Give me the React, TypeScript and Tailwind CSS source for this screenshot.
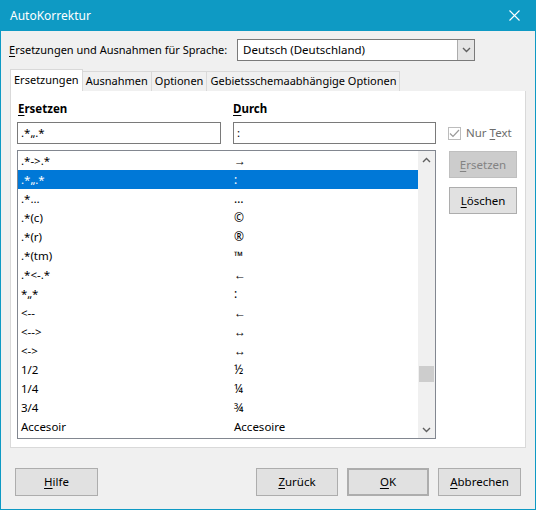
import React from 'react';

const rows: [string, string][] = [
  ['.*->.*', '→'],
  ['.*„.*', ':'],
  ['.*...', '…'],
  ['.*(c)', '©'],
  ['.*(r)', '®'],
  ['.*(tm)', '™'],
  ['.*<-.*', '←'],
  ['*„*', ':'],
  ['<--', '←'],
  ['<-->', '↔'],
  ['<->', '↔'],
  ['1/2', '½'],
  ['1/4', '¼'],
  ['3/4', '¾'],
  ['Accesoir', 'Accesoire'],
];

const U = ({ c }: { c: string }) => <span className="underline underline-offset-2">{c}</span>;

const Btn = ({ children, w, extra = '' }: { children: React.ReactNode; w: string; extra?: string }) => (
  <div className={`${w} h-[28px] flex items-center justify-center bg-[#e1e1e1] border border-[#adadad] ${extra}`}>
    {children}
  </div>
);

const Chevron = ({ up = false }: { up?: boolean }) => (
  <svg width="9" height="6" viewBox="0 0 9 6" className="block">
    <polyline
      points={up ? '1,5 4.5,1.5 8,5' : '1,1 4.5,4.5 8,1'}
      fill="none"
      stroke="#606060"
      strokeWidth="1.4"
    />
  </svg>
);

export default function App() {
  return (
    <div
      className="w-[536px] h-[510px] bg-[#0e9ac4] px-px pb-px flex flex-col text-[11.5px] text-black whitespace-nowrap"
      style={{ fontFamily: '"Noto Sans", "Open Sans", sans-serif' }}
    >
      {/* Title bar */}
      <div className="h-[31px] flex items-center justify-between pl-[9px] pr-[15px] text-white text-[12px]">
        <span>AutoKorrektur</span>
        <svg width="11" height="11" viewBox="0 0 11 11">
          <path d="M0.5 0.5 L10.5 10.5 M10.5 0.5 L0.5 10.5" stroke="#fff" strokeWidth="1.1" />
        </svg>
      </div>

      <div className="flex-1 bg-[#f0f0f0] flex flex-col">
        {/* Language row */}
        <div className="mt-[8px] h-[22px] flex items-center pl-[8px]">
          <span className="w-[228px] text-[11px]">
            <U c="E" />rsetzungen und Ausnahmen für Sprache:
          </span>
          <div className="w-[238px] h-[22px] bg-white border border-[#7a7a7a] flex items-center">
            <span className="flex-1 pl-[5px]">Deutsch (Deutschland)</span>
            <div className="w-[17px] h-full bg-[#e5e5e5] border-l border-[#acacac] flex items-center justify-center">
              <Chevron />
            </div>
          </div>
        </div>

        {/* Tabs */}
        <div className="mt-[8px] h-[22px] flex items-end pl-[9px] text-[11px]">
          <div className="h-[22px] px-[3px] bg-white border border-b-0 border-[#d9d9d9] flex items-center">Ersetzungen</div>
          <div className="h-[20px] px-[3px] bg-[#f0f0f0] border-t border-r border-[#d9d9d9] flex items-center">Ausnahmen</div>
          <div className="h-[20px] px-[3px] bg-[#f0f0f0] border-t border-r border-[#d9d9d9] flex items-center">Optionen</div>
          <div className="h-[20px] px-[3px] bg-[#f0f0f0] border-t border-r border-[#d9d9d9] flex items-center">Gebietsschemaabhängige Optionen</div>
        </div>

        {/* Panel */}
        <div className="ml-[9px] w-[516px] h-[357px] bg-white border border-t-0 border-[#d9d9d9] flex">
          <div className="ml-[6px] w-[419px] flex flex-col">
            <div className="mt-[10px] h-[16px] flex items-center font-bold leading-none">
              <span className="w-[216px] pl-[1px]"><U c="E" />rsetzen</span>
              <span><U c="D" />urch</span>
            </div>
            <div className="mt-[5px] flex gap-[12px]">
              <div className="w-[204px] h-[22px] border border-[#7a7a7a] flex items-center pl-[3px]">.*„.*</div>
              <div className="w-[203px] h-[22px] border border-[#7a7a7a] flex items-center pl-[3px]">:</div>
            </div>
            <div className="mt-[6px] h-[289px] border border-[#828790] flex">
              <div className="flex-1 flex flex-col">
                {rows.map(([a, b], i) => (
                  <div
                    key={i}
                    className={`h-[19px] shrink-0 flex items-center ${i === 1 ? 'bg-[#0078d7] text-white' : ''}`}
                  >
                    <span className="w-[216px] pl-[3px] whitespace-pre">{a}</span>
                    <span className={b.length === 1 ? 'text-[12px]' : ''}>{b}</span>
                  </div>
                ))}
              </div>
              <div className="w-[17px] bg-[#f0f0f0] flex flex-col items-center">
                <div className="h-[17px] flex items-center justify-center"><Chevron up /></div>
                <div className="flex-1 w-full px-[1px]">
                  <div className="mt-[198px] h-[16px] bg-[#cdcdcd]" />
                </div>
                <div className="h-[17px] flex items-center justify-center"><Chevron /></div>
              </div>
            </div>
          </div>

          <div className="ml-[12px] flex flex-col">
            <div className="mt-[31px] h-[22px] flex items-center gap-[5px] text-[#6d6d6d]">
              <div className="w-[13px] h-[13px] border border-[#bcbcbc] bg-white flex items-center justify-center">
                <svg width="11" height="9" viewBox="0 0 11 9">
                  <polyline points="1,4.5 4,7.5 10,1" fill="none" stroke="#9a9a9a" strokeWidth="1.2" />
                </svg>
              </div>
              <span>Nur <U c="T" />ext</span>
            </div>
            <div className="mt-[7px] ml-px w-[68px] h-[27px] flex items-center justify-center bg-[#cccccc] border border-[#bfbfbf] text-[#838383]">
              <span><U c="E" />rsetzen</span>
            </div>
            <div className="mt-[9px] ml-px w-[68px] h-[27px] flex items-center justify-center bg-[#e1e1e1] border border-[#adadad]">
              <span><U c="L" />öschen</span>
            </div>
          </div>
        </div>

        {/* Bottom buttons */}
        <div className="mt-[20px] flex items-center px-[14px]">
          <Btn w="w-[83px]"><span><U c="H" />ilfe</span></Btn>
          <div className="flex-1" />
          <div className="flex gap-[9px]">
            <Btn w="w-[82px]"><span><U c="Z" />urück</span></Btn>
            <Btn w="w-[82px]" extra="border-2 border-[#0078d7]"><span><U c="O" />K</span></Btn>
            <Btn w="w-[83px]"><span><U c="A" />bbrechen</span></Btn>
          </div>
        </div>
      </div>
    </div>
  );
}
